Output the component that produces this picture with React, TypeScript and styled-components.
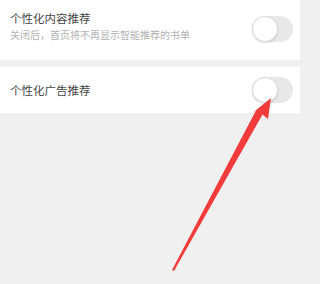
import { styled, createGlobalStyle } from "styled-components";

const GlobalStyle = createGlobalStyle`
  html, body {
    margin: 0;
    padding: 0;
    background: #f0f0f0;
    font-family: "Noto Sans CJK SC", "Noto Sans", sans-serif;
  }
`;

const Page = styled.div`
  position: relative;
  width: 300px;
  height: 284px;
  overflow: hidden;
  background: #f0f0f0;
`;

const Row = styled.div<{ $height: number; $gap?: number }>`
  height: ${(p) => p.$height}px;
  margin-top: ${(p) => p.$gap ?? 0}px;
  background: #ffffff;
  padding: 0 7px 0 10px;
  display: flex;
  align-items: center;
  justify-content: space-between;
`;

const TextCol = styled.div<{ $shift?: number }>`
  display: flex;
  flex-direction: column;
  gap: 2px;
  margin-top: ${(p) => p.$shift ?? 0}px;
`;

const Title = styled.div`
  font-size: 11.5px;
  line-height: 16px;
  color: #454545;
`;

const Sub = styled.div`
  font-size: 10px;
  line-height: 14px;
  color: #b3b3b3;
`;

const Toggle = styled.div<{ $shift?: number }>`
  position: relative;
  width: 41px;
  height: 26px;
  border-radius: 13px;
  background: #e8e8e8;
  margin-top: ${(p) => p.$shift ?? 0}px;
`;

const Knob = styled.div`
  position: absolute;
  left: 0;
  top: 0;
  width: 26px;
  height: 26px;
  box-sizing: border-box;
  border-radius: 50%;
  background: #ffffff;
  border: 1px solid #dcdcdc;
  box-shadow: 0 1px 2px rgba(0, 0, 0, 0.12);
`;

const Arrow = styled.svg`
  position: absolute;
  left: 0;
  top: 0;
  width: 300px;
  height: 284px;
  pointer-events: none;
`;

export default function App() {
  return (
    <>
      <GlobalStyle />
      <Page>
        <Row $height={60}>
          <TextCol $shift={-8}>
            <Title>个性化内容推荐</Title>
            <Sub>关闭后，首页将不再显示智能推荐的书单</Sub>
          </TextCol>
          <Toggle $shift={-3}>
            <Knob />
          </Toggle>
        </Row>
        <Row $height={46} $gap={7}>
          <TextCol>
            <Title>个性化广告推荐</Title>
          </TextCol>
          <Toggle>
            <Knob />
          </Toggle>
        </Row>
        <Arrow viewBox="0 0 300 284">
          <polygon
            points="271,98 268,119 262.5,114.5 174,271 172,270 256,110.5 250,115"
            fill="#f23b3b"
          />
        </Arrow>
      </Page>
    </>
  );
}
